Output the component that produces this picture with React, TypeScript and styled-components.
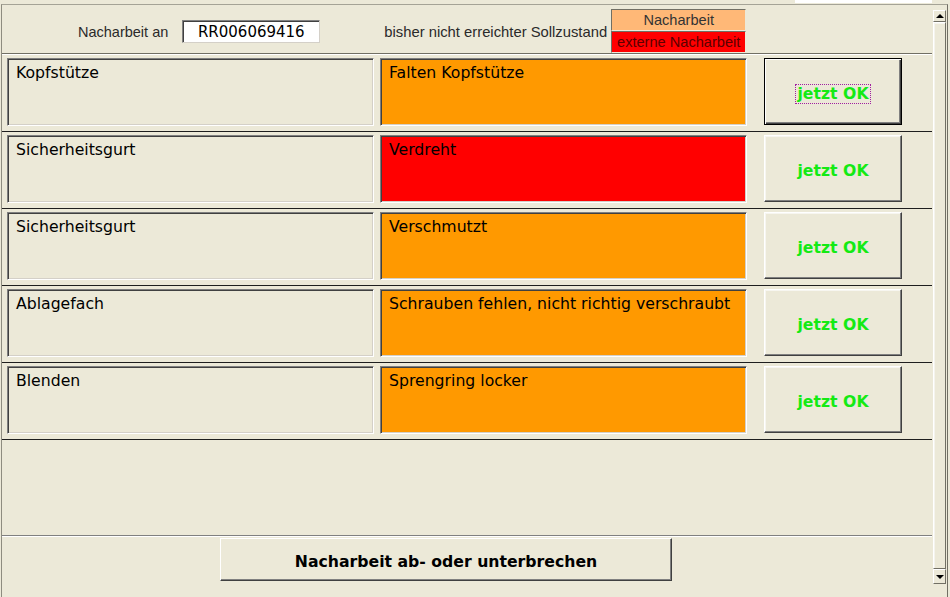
import React from "react";
import styled, { createGlobalStyle } from "styled-components";

type Status = "intern" | "extern";

type RowData = {
    teil: string;
    fehler: string;
    status: Status;
};

const rows: RowData[] = [
    { teil: "Kopfstütze", fehler: "Falten Kopfstütze", status: "intern" },
    { teil: "Sicherheitsgurt", fehler: "Verdreht", status: "extern" },
    { teil: "Sicherheitsgurt", fehler: "Verschmutzt", status: "intern" },
    { teil: "Ablagefach", fehler: "Schrauben fehlen, nicht richtig verschraubt", status: "intern" },
    { teil: "Blenden", fehler: "Sprengring locker", status: "intern" },
];

const GlobalStyle = createGlobalStyle`
    html, body {
        margin: 0;
        padding: 0;
        background: #ECE9D8;
    }
    body {
        font-family: "DejaVu Sans", sans-serif;
    }
`

const Window = styled.div`
    width: 950px;
    height: 597px;
    overflow: hidden;
    background: #ECE9D8;
    display: flex;
    flex-direction: column;
`

const TopStrip = styled.div`
    height: 4px;
    display: flex;
    justify-content: flex-end;
`

const TopWhite = styled.div`
    width: 137px;
    height: 3px;
    margin-right: 18px;
    background: #ffffff;
`

const Frame = styled.div`
    flex: 1;
    display: flex;
    flex-direction: row;
    margin-left: 1px;
    width: 945px;
    border-top: 1px solid #A5A396;
    border-left: 1px solid #8E8C80;
    border-right: 1px solid #716F64;
`

const Content = styled.div`
    width: 930px;
    display: flex;
    flex-direction: column;
`

const Header = styled.div`
    height: 49px;
    box-sizing: border-box;
    padding-top: 5px;
    display: flex;
    flex-direction: row;
    align-items: center;
    border-bottom: 1px solid #716F64;
    font-family: "Liberation Sans", Arial, sans-serif;
    font-size: 14.5px;
    color: #2a2a2a;
`

const HeaderLabel = styled.span<{ $left: number; $size?: number }>`
    margin-left: ${props => props.$left}px;
    font-size: ${props => props.$size || 14.5}px;
    white-space: nowrap;
`

const NumberBox = styled.div`
    margin-left: 14px;
    width: 138px;
    height: 23px;
    box-sizing: border-box;
    background: #ffffff;
    border: 1px solid;
    border-color: #808080 #D4D0C8 #D4D0C8 #808080;
    box-shadow: inset 1px 1px 0 #404040;
    display: flex;
    align-items: center;
    justify-content: center;
    font-family: "DejaVu Sans", sans-serif;
    font-size: 15px;
    color: #000;
`

const Legend = styled.div`
    margin-left: 4px;
    align-self: flex-start;
    margin-top: -1px;
    display: flex;
    flex-direction: column;
`

const LegendItem = styled.div<{ $status: Status }>`
    width: 135px;
    height: 22px;
    box-sizing: border-box;
    border: 1px solid;
    border-color: #716F64 #ECE9D8 #ECE9D8 #716F64;
    background: ${props => props.$status === "extern" ? "#FF0000" : "#FFB877"};
    color: ${props => props.$status === "extern" ? "#5a0000" : "#333"};
    font-size: 14.6px;
    display: flex;
    align-items: center;
    justify-content: center;
    white-space: nowrap;
`

const RowList = styled.div`
    border-top: 1px solid #ffffff;
    display: flex;
    flex-direction: column;
`

const Row = styled.div`
    height: 77px;
    box-sizing: border-box;
    padding: 3px 0 0 5px;
    display: flex;
    flex-direction: row;
    align-items: flex-start;
    border-bottom: 1px solid #1e1e1e;
`

const Field = styled.div<{ $color?: string }>`
    width: 367px;
    height: 68px;
    box-sizing: border-box;
    padding: 4px 0 0 8px;
    margin-right: 6px;
    background: ${props => props.$color || "#ECE9D8"};
    border: 1px solid;
    border-color: #7F7F7F #FFFFFF #FFFFFF #7F7F7F;
    box-shadow: inset 1px 1px 0 #404040, inset -1px -1px 0 #D4D0C8;
    font-family: "DejaVu Sans", sans-serif;
    font-size: 15.7px;
    line-height: 19px;
    color: #000;
    white-space: nowrap;
`

const OkButton = styled.button<{ $focused?: boolean }>`
    margin-left: 11px;
    width: 138px;
    height: 67px;
    box-sizing: border-box;
    padding: 5px 0 0 0;
    background: #ECE9D8;
    border: 1px solid;
    border-color: ${props => props.$focused ? "#000 #000 #000 #000" : "#FFFFFF #404040 #404040 #FFFFFF"};
    box-shadow: ${props => props.$focused
        ? "inset 1px 1px 0 #fff, inset -1px -1px 0 #404040, inset -2px -2px 0 #808080"
        : "inset -1px -1px 0 #808080, inset 1px 1px 0 #F7F6F0"};
    display: flex;
    align-items: center;
    justify-content: center;
    font-family: "DejaVu Sans", sans-serif;
    font-weight: bold;
    font-size: 15.7px;
    color: #14EA14;
    cursor: pointer;
`

const FocusLabel = styled.span<{ $focused?: boolean }>`
    padding: 0 1px;
    border: 1px dotted ${props => props.$focused ? "#A020A0" : "transparent"};
    line-height: 18px;
`

const Spacer = styled.div`
    height: 95px;
    border-bottom: 1px solid #808080;
`

const Footer = styled.div`
    flex: 1;
    border-top: 1px solid #ffffff;
    padding: 1px 0 0 218px;
`

const BigButton = styled.button`
    width: 452px;
    height: 43px;
    box-sizing: border-box;
    padding: 3px 0 0 0;
    background: #ECE9D8;
    border: 1px solid;
    border-color: #FFFFFF #404040 #404040 #FFFFFF;
    box-shadow: inset -1px -1px 0 #808080;
    font-family: "DejaVu Sans", sans-serif;
    font-weight: bold;
    font-size: 15.7px;
    color: #000;
`

const Scrollbar = styled.div`
    width: 13px;
    margin-left: 1px;
    padding: 5px 0 13px 0;
    display: flex;
    flex-direction: column;
`

const ScrollButton = styled.div<{ $height: number }>`
    height: ${props => props.$height}px;
    box-sizing: border-box;
    background: #ECE9D8;
    border: 1px solid;
    border-color: #FFFFFF #716F64 #716F64 #FFFFFF;
    display: flex;
    align-items: center;
    justify-content: center;
`

const Thumb = styled.div`
    flex: 1;
    box-sizing: border-box;
    background: #ECE9D8;
    border: 1px solid;
    border-color: #FFFFFF #716F64 #716F64 #FFFFFF;
    box-shadow: inset 1px 1px 0 #F5F4EE;
`

const Arrow = styled.div<{ $down?: boolean }>`
    width: 0;
    height: 0;
    border-left: 4px solid transparent;
    border-right: 4px solid transparent;
    ${props => props.$down ? "border-top: 4px solid #000;" : "border-bottom: 4px solid #000;"}
`

export default function App() {
    return (
        <Window>
            <GlobalStyle />
            <TopStrip>
                <TopWhite />
            </TopStrip>
            <Frame>
                <Content>
                    <Header>
                        <HeaderLabel $left={76}>Nacharbeit an</HeaderLabel>
                        <NumberBox>RR006069416</NumberBox>
                        <HeaderLabel $left={64} $size={14.8}>bisher nicht erreichter Sollzustand</HeaderLabel>
                        <Legend>
                            <LegendItem $status="intern">Nacharbeit</LegendItem>
                            <LegendItem $status="extern">externe Nacharbeit</LegendItem>
                        </Legend>
                    </Header>
                    <RowList>
                        {rows.map((row, i) => (
                            <Row key={i}>
                                <Field>{row.teil}</Field>
                                <Field $color={row.status === "extern" ? "#FF0000" : "#FF9900"}>{row.fehler}</Field>
                                <OkButton $focused={i === 0}>
                                    <FocusLabel $focused={i === 0}>jetzt OK</FocusLabel>
                                </OkButton>
                            </Row>
                        ))}
                    </RowList>
                    <Spacer />
                    <Footer>
                        <BigButton>Nacharbeit ab- oder unterbrechen</BigButton>
                    </Footer>
                </Content>
                <Scrollbar>
                    <ScrollButton $height={12}><Arrow /></ScrollButton>
                    <Thumb />
                    <ScrollButton $height={15}><Arrow $down /></ScrollButton>
                </Scrollbar>
            </Frame>
        </Window>
    );
}
